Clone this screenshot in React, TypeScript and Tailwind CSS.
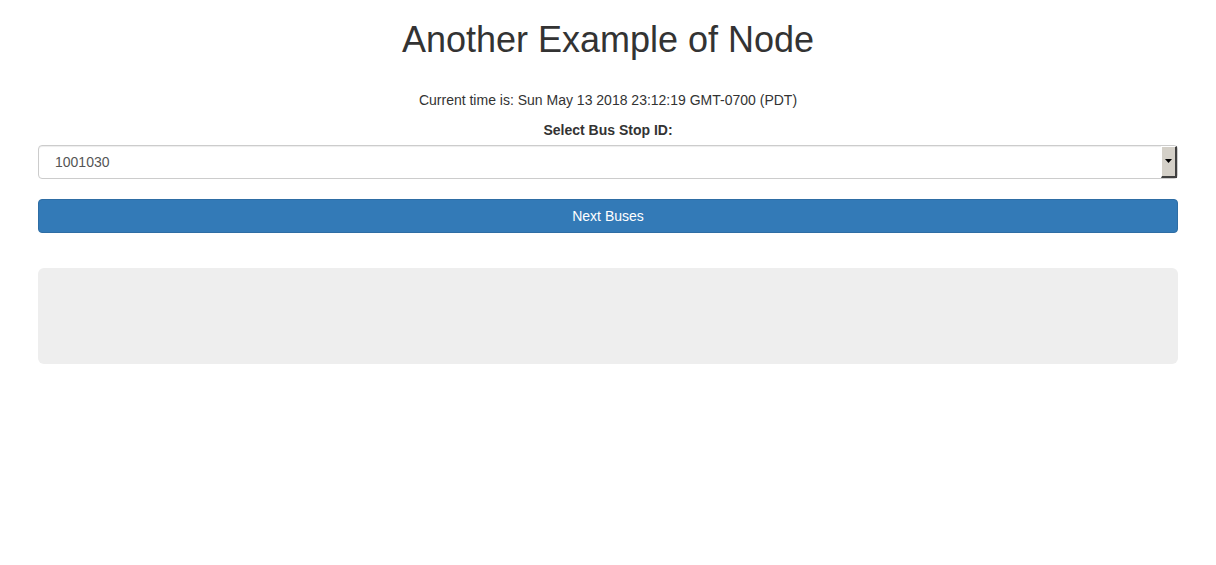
export default function App() {
  return (
    <div className="min-h-screen bg-white font-['Liberation_Sans',Arial,sans-serif] text-[14px] leading-[20px] text-[#333]">
      <div className="mx-auto w-[1170px] px-[15px]">
        {/* Title */}
        <h1 className="mt-[20px] mb-[10px] text-center text-[36px] leading-[1.1] font-normal">
          Another Example of Node
        </h1>

        <p className="mt-[30px] mb-[10px] text-center">
          Current time is: Sun May 13 2018 23:12:19 GMT-0700 (PDT)
        </p>

        {/* Bus stop form */}
        <div className="mb-[20px]">
          <label className="mb-[5px] block text-center font-bold">Select Bus Stop ID:</label>
          <div className="relative h-[34px] rounded-[4px] border border-[#ccc] bg-white shadow-[inset_0_1px_1px_rgba(0,0,0,0.075)]">
            <div className="flex h-full items-center pl-[16px] text-[#555]">1001030</div>
            <div className="absolute top-0 right-0 bottom-0 flex w-[16px] items-center justify-center border-t border-l border-t-white border-l-white border-r-[2px] border-b-[2px] border-r-[#404040] border-b-[#404040] bg-[#d4d0c8]">
              <svg width="7" height="4" viewBox="0 0 7 4">
                <path d="M0 0h7L3.5 4z" fill="#000" />
              </svg>
            </div>
          </div>
        </div>

        <button className="block h-[34px] w-full rounded-[4px] border border-[#2e6da4] bg-[#337ab7] text-center text-white">
          Next Buses
        </button>

        {/* Results panel */}
        <div className="mt-[35px] mb-[30px] h-[96px] rounded-[6px] bg-[#eee]" />
      </div>
    </div>
  )
}
